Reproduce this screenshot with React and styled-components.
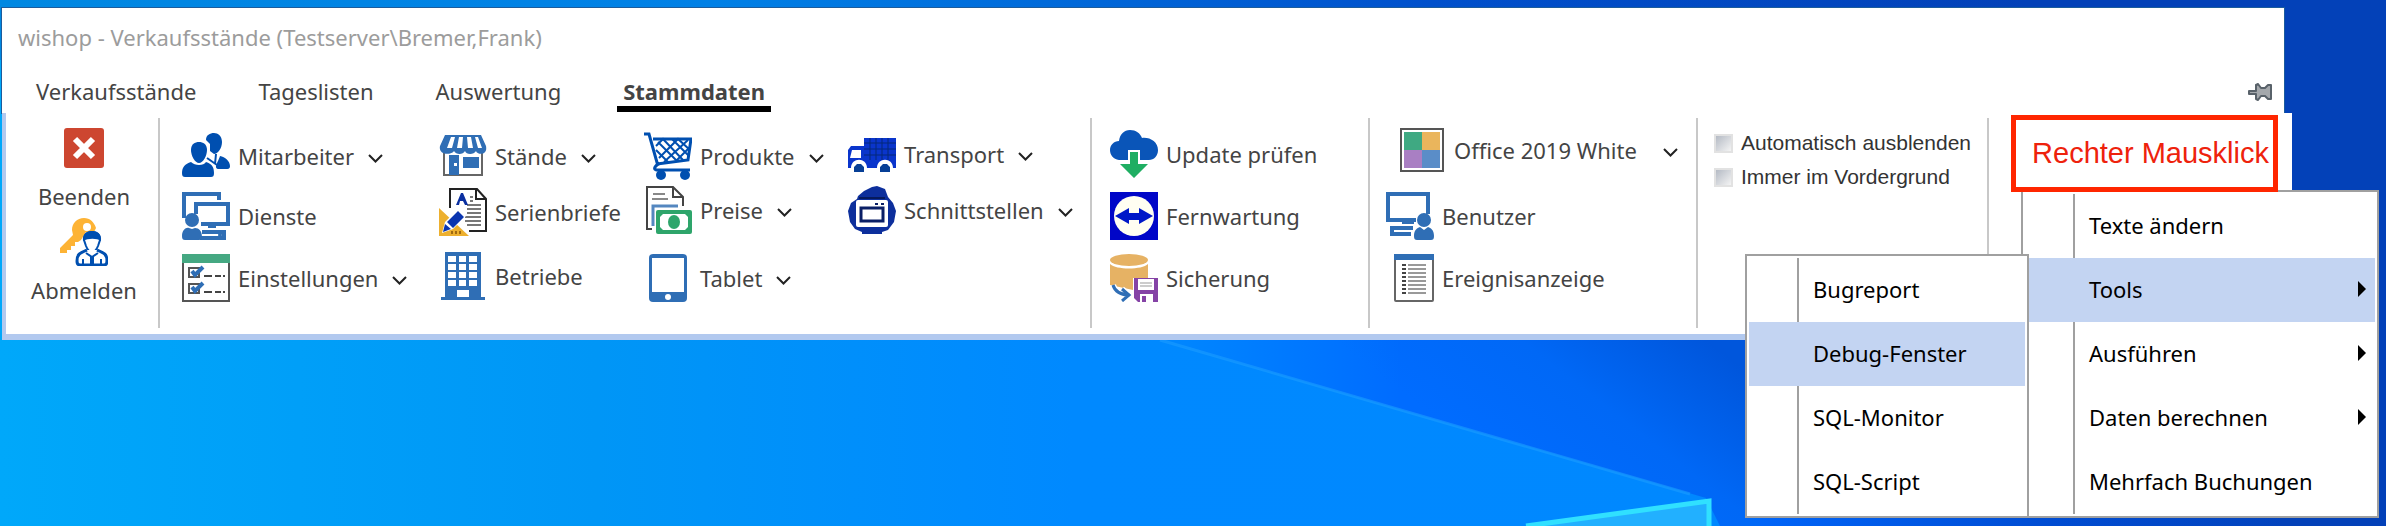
import React, { useState } from 'react';
import styled, { createGlobalStyle } from 'styled-components';

const GlobalStyle = createGlobalStyle`
    * {
        box-sizing: border-box;
    }

    body {
        margin: 0;
        font-family: "Noto Sans", "Open Sans", sans-serif;
        font-size: 22px;
        color: #444;
    }

    button,
    select {
        margin: 0;
        padding: 0;
        border: 0;
        background: none;
        font: inherit;
        color: inherit;
        white-space: nowrap;
    }
`;

const Desktop = styled.div`
    position: relative;
    min-height: 100vh;
    padding: 8px 94px 8px 2px;
    overflow: hidden;
    background: #0341b8;
`;

const WallpaperSvg = styled.svg`
    position: absolute;
    inset: 0;
    width: 100%;
    height: 100%;
`;

const AppWindow = styled.main`
    position: relative;
`;

const WindowHead = styled.header`
    margin-right: 8px;
    background: #fff;
    box-shadow: 0 0 0 1px #1c5c9c;
`;

const TitleBar = styled.h1`
    margin: 0;
    padding: 0 16px;
    font-size: 22px;
    font-weight: 400;
    line-height: 58px;
    color: #9c9c9c;
`;

const TabBar = styled.nav`
    display: flex;
    gap: 50px;
    height: 47px;
    padding: 12px 12px 0 28px;
`;

const Tab = styled.button`
    height: 34px;
    padding: 0 6px 2px;
    border-bottom: 6px solid ${(p) => (p.$active ? '#000' : 'transparent')};
    font-weight: ${(p) => (p.$active ? 700 : 400)};
    line-height: 26px;
`;

const PinButton = styled.button`
    display: flex;
    align-items: center;
    height: 28px;
    margin-left: auto;
`;

const Ribbon = styled.section`
    display: grid;
    grid-template-columns: 154fr 932fr 278fr 328fr 291fr 303fr;
    padding: 5px 0 6px;
    border-left: 4px solid #b2c9ef;
    border-bottom: 6px solid #b2c9ef;
    background: #fff;
`;

const Group = styled.div`
    display: grid;
    grid-template-columns: ${(p) => p.$columns || '1fr'};
    min-height: 210px;
    padding-left: ${(p) => p.$pad || 0}px;
    border-right: ${(p) => (p.$last ? '0' : '2px solid #c8c8c8')};
`;

const Column = styled.div`
    display: grid;
    grid-template-rows: ${(p) => p.$rows};
    align-content: start;
    align-items: start;
    justify-items: start;
    padding-top: ${(p) => p.$top}px;
`;

const LargeColumn = styled.div`
    display: flex;
    flex-direction: column;
    align-items: center;
    gap: 6px;
    padding-top: 6px;
`;

const LargeButton = styled.button`
    display: flex;
    flex-direction: column;
    align-items: center;
    gap: 8px;
    line-height: 32px;
`;

const ItemButton = styled.button`
    display: flex;
    align-items: center;
    gap: 8px;
    height: 48px;
    line-height: 28px;
`;

const ItemSelect = styled.label`
    display: flex;
    align-items: center;
    gap: 8px;
    height: 48px;
    margin-left: 12px;
`;

const SkinSelect = styled.select`
    appearance: none;
    height: 48px;
    padding-right: 12px;
`;

const Icon = styled.svg`
    flex: none;
    width: 48px;
    height: 48px;
`;

const ChevronSvg = styled.svg`
    flex: none;
    width: 15px;
    height: 9px;
    margin: 4px 0 0 6px;
`;

const CheckColumn = styled.div`
    display: flex;
    flex-direction: column;
    gap: 4px;
    padding-top: 10px;
`;

const CheckLabel = styled.label`
    display: flex;
    align-items: center;
    gap: 8px;
    font-family: "Liberation Sans", sans-serif;
    font-size: 21px;
    line-height: 30px;
    white-space: nowrap;
    color: #333;
`;

const CheckBox = styled.input`
    appearance: none;
    width: 19px;
    height: 19px;
    margin: 0;
    border: 2px solid #e2e2e2;
    outline: 0;
    background: linear-gradient(135deg, #b4bac4, #f4f4f4);

    &:checked {
        background: #1f6bb5;
    }
`;

const Annotation = styled.div`
    position: absolute;
    top: 115px;
    right: 108px;
    z-index: 3;
    padding: 17px 4px 17px 16px;
    border: 5px solid #ff2600;
    font-family: "Liberation Sans", sans-serif;
    font-size: 29px;
    line-height: 33px;
    white-space: nowrap;
    color: #ee220c;
`;

const MenuLayer = styled.div`
    position: absolute;
    top: 190px;
    right: 7px;
    display: flex;
    align-items: flex-end;
`;

const Menu = styled.ul`
    position: relative;
    z-index: ${(p) => (p.$sub ? 2 : 1)};
    min-width: ${(p) => (p.$sub ? 284 : 358)}px;
    margin: 0 ${(p) => (p.$sub ? '-8px' : 0)} 0 0;
    padding: 2px;
    border: 2px solid #a0a0a0;
    background: #fff;
    list-style: none;
`;

const MenuButton = styled.button`
    display: flex;
    align-items: center;
    width: 100%;
    height: 64px;
    padding: 0 9px 2px 0;
    text-align: left;
    color: #000;
    background: ${(p) => (p.$active ? '#c3d4f2' : '#fff')};

    &::before {
        content: "";
        align-self: stretch;
        width: 48px;
        margin: 0 14px -2px 0;
        border-right: 2px solid ${(p) => (p.$active ? 'transparent' : '#a0a0a0')};
    }
`;

const Arrow = styled.svg`
    width: 8px;
    height: 16px;
    margin-left: auto;
`;

const BLUE = '#2f6eb5';
const DEEP = '#004fb0';

const Wallpaper = () => (
    <WallpaperSvg viewBox="0 0 2386 526" preserveAspectRatio="none" aria-hidden="true">
        <defs>
            <linearGradient id="sky" x1="0" x2="1">
                <stop offset="0" stopColor="#00a8fa" />
                <stop offset="0.25" stopColor="#0096f6" />
                <stop offset="0.45" stopColor="#0089ff" />
                <stop offset="0.72" stopColor="#0088ff" />
            </linearGradient>
            <linearGradient id="top" x1="0" x2="1">
                <stop offset="0" stopColor="#0088e2" />
                <stop offset="0.3" stopColor="#0080e6" />
                <stop offset="0.6" stopColor="#0050cc" />
                <stop offset="0.85" stopColor="#0341b8" />
            </linearGradient>
            <linearGradient id="shade" gradientUnits="userSpaceOnUse" x1="1540" y1="500" x2="1680" y2="320">
                <stop offset="0" stopColor="#006cff" />
                <stop offset="0.5" stopColor="#0068f6" />
                <stop offset="1" stopColor="#0056dc" />
            </linearGradient>
            <linearGradient id="edge" gradientUnits="userSpaceOnUse" x1="1160" y1="0" x2="1400" y2="0">
                <stop offset="0" stopColor="#0088ff" />
                <stop offset="1" stopColor="#0088ff" stopOpacity="0" />
            </linearGradient>
            <linearGradient id="right" gradientUnits="userSpaceOnUse" x1="1760" y1="0" x2="2340" y2="0">
                <stop offset="0" stopColor="#0064f8" />
                <stop offset="0.5" stopColor="#004cd2" />
                <stop offset="1" stopColor="#0341b8" />
            </linearGradient>
        </defs>
        <rect width="2386" height="526" fill="url(#sky)" />
        <path d="M1160 340H1760V526H1720L1706 498Z" fill="url(#shade)" />
        <path d="M1160 340H1400V412Z" fill="url(#edge)" />
        <path d="M1160 340 1690 494" stroke="#1c9dff" strokeWidth="3" opacity="0.6" />
        <rect x="1760" width="626" height="526" fill="url(#right)" />
        <rect x="2280" width="106" height="526" fill="#0341b8" />
        <rect width="2386" height="60" fill="url(#top)" />
        <path d="M1526 526 1710 500V526Z" fill="#22b0ff" />
        <path d="M1526 526 1709 501V526" fill="none" stroke="#30e0ff" strokeWidth="5" />
    </WallpaperSvg>
);

const Chevron = () => (
    <ChevronSvg viewBox="0 0 15 9" aria-hidden="true">
        <path d="M1 1 7.5 7.5 14 1" fill="none" stroke="#222" strokeWidth="2" />
    </ChevronSvg>
);

const CloseIcon = () => (
    <Icon viewBox="0 0 48 48">
        <rect x="4" y="4" width="40" height="40" rx="3" fill="#cd4630" />
        <path d="M15 15 33 33M33 15 15 33" stroke="#fff" strokeWidth="6" />
    </Icon>
);

const LogoutIcon = () => (
    <Icon viewBox="0 0 48 48">
        <path d="M24 0C17 0 12 5 12 12L13 17 0 30V35H7V32H11V28H15V24H18L21 22 26 14 34 14 36 10C34 4 30 0 24 0Z" fill="#fdb335" />
        <circle cx="27" cy="9" r="4" fill="#fff" />
        <path d="M24 22C24 16 28 14 32 14S40 16 40 22L38 28C36 33 34 34 32 34S28 33 26 28Z" fill="#fff" stroke={DEEP} strokeWidth="2" />
        <path d="M23 23C22 15 28 13 32 13S42 15 41 23C37 20 28 20 23 23Z" fill={DEEP} />
        <path d="M27 32C20 35 17 36 17 43 17 46 18 47 20 47H44C46 47 47 46 47 43 47 36 44 35 37 32" fill="#fff" stroke={DEEP} strokeWidth="3" />
        <path d="M26 35 32 39 38 35M23 41V46M41 41V46" fill="none" stroke={DEEP} strokeWidth="2" />
        <path d="M30 38H34V46H30Z" fill={DEEP} />
    </Icon>
);

const StaffIcon = () => (
    <Icon viewBox="0 0 48 48">
        <path d="M24 8C24 3 28 1 32 1S40 4 40 10C40 16 36 22 32 22L28 19V12Z" fill={DEEP} />
        <path d="M35 31C37 27 38 24 38 24 43 25 48 29 48 34 48 37 46 37 44 37H37C34 37 33 35 35 31Z" fill={DEEP} />
        <path d="M9 18C9 12 13 10 17 10S25 12 25 18C25 24 21 31 17 31S9 24 9 18Z" fill={DEEP} />
        <path d="M9 30C11 32 14 33 17 33S23 32 24 30C30 32 32 35 32 41 32 44 31 45 29 45H3C1 45 0 44 0 41 0 35 3 32 9 30Z" fill={DEEP} />
        <path d="M25 26 35 33M34 22 33 32" stroke={DEEP} strokeWidth="2" />
    </Icon>
);

const ServicesIcon = () => (
    <Icon viewBox="0 0 48 48">
        <path d="M2 26V2H37V8" fill="none" stroke={BLUE} strokeWidth="4" />
        <path d="M14 22V12H46V32H19" fill="none" stroke={BLUE} strokeWidth="4" />
        <path d="M26 34H34V36H26Z" fill={BLUE} />
        <path d="M20 40H42V46H18" fill="none" stroke={BLUE} strokeWidth="4" />
        <circle cx="38" cy="43" r="2" fill={BLUE} />
        <circle cx="10" cy="28" r="7" fill={BLUE} />
        <path d="M0 44C0 38 4 35 7 36L10 37 13 36C17 36 20 39 20 45 20 47 19 48 17 48H3C1 48 0 47 0 44Z" fill={BLUE} />
    </Icon>
);

const SettingsIcon = () => (
    <Icon viewBox="0 0 48 48">
        <rect x="1" y="1" width="46" height="46" fill="#fff" stroke="#555" strokeWidth="2" />
        <path d="M0 0H48V9H0Z" fill="#45a882" />
        <path d="M7 14H17V23H7ZM7 30H17V39H7Z" fill="none" stroke="#555" strokeWidth="2" />
        <path d="M10 17 13 21 21 13M10 33 13 37 21 29" fill="none" stroke={BLUE} strokeWidth="4" />
        <path d="M22 22H30M33 22H39M41 22H43M22 38H30M33 38H39M41 38H43" stroke="#444" strokeWidth="2" />
    </Icon>
);

const StallIcon = () => (
    <Icon viewBox="0 0 48 48">
        <path d="M5 20V43H43V20" fill="#fff" stroke="#666" strokeWidth="2" />
        <path d="M6 3H42L47 14C49 24 38 23 37 19 35 23 27 23 26 19 24 23 17 23 15 19 13 23 -1 24 1 14Z" fill={BLUE} />
        <path d="M12 5H16L13 16H8ZM20 5H24L23 16H18ZM28 5H32L34 16H29ZM36 5H39L43 16H39Z" fill="#fff" />
        <path d="M10 23H20V43H10Z M24 25H40V36H24Z" fill={BLUE} />
        <rect x="15" y="31" width="3" height="3" fill="#fff" />
    </Icon>
);

const LetterIcon = () => (
    <Icon viewBox="0 0 48 48">
        <path d="M11 20V1H38L47 11V43H30" fill="#fff" stroke="#222" strokeWidth="2" />
        <path d="M37 1V11H47" fill="none" stroke="#222" strokeWidth="2" />
        <path d="M31 9H34M31 13H34M28 17H42M28 21H42M28 25H42M26 29H42M26 33H42M28 37H42" stroke="#777" strokeWidth="2" />
        <path d="M17 17 22 5H24L29 17H26L24 13H21L20 17Z" fill="#0a2fa0" />
        <path d="M0 20V48H30Z" fill="#edb02f" />
        <path d="M13 43V46M17 43V46M21 43V46" stroke="#a06a10" strokeWidth="2" />
        <path d="M3 45 6 34 20 20 28 27 14 41Z" fill="#fff" />
        <path d="M4 44 6 36 12 41ZM8 34 19 23 25 29 14 40Z" fill="#0a35b0" />
    </Icon>
);

const BuildingIcon = () => (
    <Icon viewBox="0 0 48 48">
        <path d="M6 0H42V45H46V48H2V45H6Z" fill={BLUE} />
        <path d="M9 4H17V10H9ZM20 4H27V10H20ZM30 4H38V10H30ZM9 12H17V18H9ZM20 12H27V18H20ZM30 12H38V18H30ZM9 20H17V26H9ZM20 20H27V26H20ZM30 20H38V26H30ZM9 28H17V34H9ZM20 28H27V34H20ZM30 28H38V34H30ZM18 38H30V45H18Z" fill="#fff" />
    </Icon>
);

const CartIcon = () => (
    <Icon viewBox="0 0 48 48">
        <path d="M0 2H5L14 34M9 7H47L44 28 13 32M14 32C9 36 10 38 14 38H46" fill="none" stroke={DEEP} strokeWidth="3" />
        <path d="M12 14 19 7 39 28M12 18 24 30M15 26 34 7 46 18M28 7 45 24M20 30 44 8M32 29 46 15M14 10 32 28" fill="none" stroke={DEEP} strokeWidth="2" />
        <circle cx="17" cy="43" r="5" fill={DEEP} />
        <circle cx="41" cy="43" r="5" fill={DEEP} />
    </Icon>
);

const PriceIcon = () => (
    <Icon viewBox="0 0 48 48">
        <path d="M8 43H3V1H29L39 11V20" fill="#fff" stroke="#444" strokeWidth="2" />
        <path d="M29 1V11H39" fill="none" stroke="#444" strokeWidth="2" />
        <path d="M9 8H21M8 13H24" stroke="#888" strokeWidth="2" />
        <path d="M9 40V20H34" fill="none" stroke="#5487c0" strokeWidth="3" />
        <rect x="12" y="24" width="36" height="24" rx="2" fill="#2ea56b" />
        <path d="M19 28H41L44 31V41L41 44H19L16 41V31Z" fill="#fff" />
        <ellipse cx="30" cy="36" rx="6" ry="7" fill="#2ea56b" />
    </Icon>
);

const TabletIcon = () => (
    <Icon viewBox="0 0 48 48">
        <rect x="5" y="0" width="38" height="48" rx="4" fill={BLUE} />
        <path d="M8 4H40V38H8Z" fill="#fff" />
        <circle cx="24" cy="43" r="3" fill="#fff" />
    </Icon>
);

const TruckIcon = () => (
    <Icon viewBox="0 0 48 48">
        <path d="M16 8H48V38H0V20L3 16H16Z" fill="#0a35cc" />
        <path d="M16 13H48M16 19H48M16 25H48M22 8V30M28 8V30M34 8V30M40 8V30" stroke="#052878" strokeWidth="1" />
        <path d="M4 20H13V28H2Z" fill="#fff" />
        <path d="M3 38C3 27 19 27 19 38ZM29 38C29 27 45 27 45 38Z" fill="#fff" />
        <path d="M6 42V37L9 34H13L16 37V42ZM32 42V37L35 34H39L42 37V42Z" fill="#073f96" />
    </Icon>
);

const InterfaceIcon = () => (
    <Icon viewBox="0 0 48 48">
        <path d="M10 10 16 5 24 1 29 0 37 3 40 11 45 17 48 25 46 36 40 44 34 46V48H14V46L7 43 2 36 0 25 3 17 9 13Z" fill="#0d2f9c" />
        <rect x="8" y="14" width="32" height="27" rx="2" fill="#fff" />
        <path d="M13 22H35V35H13Z" fill="#fff" stroke="#0a1f66" strokeWidth="3" />
        <path d="M27 18H30M33 18H36" stroke="#0a1f66" strokeWidth="2" />
        <path d="M11 12H37" stroke="#061a5c" strokeWidth="2" />
    </Icon>
);

const UpdateIcon = () => (
    <Icon viewBox="0 0 48 48">
        <path d="M9 30C3 29 0 25 0 20 0 15 4 11 9 11 10 4 14 0 20 0 26 0 30 3 32 8 40 7 48 12 48 20 48 26 44 30 39 30Z" fill="#0a55b8" />
        <path d="M18 20H30V34H18Z" fill="#fff" />
        <path d="M20 22H28V34H38L24 48 10 34H20Z" fill="#1fae62" />
    </Icon>
);

const RemoteIcon = () => (
    <Icon viewBox="0 0 48 48">
        <rect width="48" height="48" fill="#0006c8" />
        <circle cx="24" cy="24" r="20" fill="#fffef2" />
        <path d="M5 24 19 16V21H29V16L43 24 29 32V28H19V32Z" fill="#0018c8" />
    </Icon>
);

const BackupIcon = () => (
    <Icon viewBox="0 0 48 48">
        <ellipse cx="19" cy="6" rx="19" ry="6" fill="#e6b264" />
        <path d="M0 10C6 16 32 16 38 10V24H23V36L0 31Z" fill="#e6b264" />
        <path d="M3 31C5 38 10 41 18 41M12 35 19 41 12 47" fill="none" stroke="#fff" strokeWidth="6" />
        <path d="M3 31C5 38 10 41 20 41M12 35 19 41 12 47" fill="none" stroke={BLUE} strokeWidth="3" />
        <path d="M24 24H48V48H28L24 44Z" fill="#8543a6" />
        <path d="M28 25H44V36H28ZM30 40H43V48H30Z" fill="#fff" />
        <path d="M30 29H42M30 32H42" stroke="#999" strokeWidth="1" />
        <path d="M32 42H36V48H32Z" fill="#8543a6" />
    </Icon>
);

const SkinIcon = () => (
    <Icon viewBox="0 0 48 48">
        <rect x="3" y="3" width="42" height="42" fill="#fff" stroke="#555" strokeWidth="2" />
        <path d="M6 6H24V24H6Z" fill="#3fa982" />
        <path d="M24 6H42V24H24Z" fill="#eab55c" />
        <path d="M6 24H24V42H6Z" fill="#a97fc3" />
        <path d="M24 24H42V42H24Z" fill="#5a8dc8" />
    </Icon>
);

const UserIcon = () => (
    <Icon viewBox="0 0 48 48">
        <path d="M30 28H2V2H42V22" fill="none" stroke={BLUE} strokeWidth="4" />
        <path d="M16 28H28V32H16Z" fill={BLUE} />
        <path d="M27 36H6V42H25" fill="none" stroke={BLUE} strokeWidth="4" />
        <circle cx="38" cy="28" r="7" fill={BLUE} />
        <path d="M28 44C28 38 31 36 34 35L38 38 42 35C45 36 48 38 48 44 48 47 47 48 45 48H31C29 48 28 47 28 44Z" fill={BLUE} />
    </Icon>
);

const EventIcon = () => (
    <Icon viewBox="0 0 48 48">
        <rect x="9" y="1" width="38" height="46" rx="1" fill="#fff" stroke="#666" strokeWidth="2" />
        <path d="M8 0H48V6H8Z" fill={BLUE} />
        <path d="M16 11H20M16 15H20M16 19H20M16 23H20M16 27H20M16 31H20M16 35H20M16 39H20" stroke="#444" strokeWidth="2" />
        <path d="M22 11H40M22 15H40M22 19H40M22 23H40M22 27H40M22 31H40M22 35H40M22 39H40" stroke="#999" strokeWidth="2" />
    </Icon>
);

const tabs = ['Verkaufsstände', 'Tageslisten', 'Auswertung', 'Stammdaten'];

const masterColumns = [
    {
        top: 14,
        rows: '60px 62px 48px',
        items: [
            { label: 'Mitarbeiter', icon: StaffIcon, more: true },
            { label: 'Dienste', icon: ServicesIcon },
            { label: 'Einstellungen', icon: SettingsIcon, more: true },
        ],
    },
    {
        top: 14,
        rows: '56px 64px 48px',
        items: [
            { label: 'Stände', icon: StallIcon, more: true },
            { label: 'Serienbriefe', icon: LetterIcon },
            { label: 'Betriebe', icon: BuildingIcon },
        ],
    },
    {
        top: 14,
        rows: '54px 68px 48px',
        items: [
            { label: 'Produkte', icon: CartIcon, more: true },
            { label: 'Preise', icon: PriceIcon, more: true },
            { label: 'Tablet', icon: TabletIcon, more: true },
        ],
    },
    {
        top: 12,
        rows: '56px 48px',
        items: [
            { label: 'Transport', icon: TruckIcon, more: true },
            { label: 'Schnittstellen', icon: InterfaceIcon, more: true },
        ],
    },
];

const serviceItems = [
    { label: 'Update prüfen', icon: UpdateIcon },
    { label: 'Fernwartung', icon: RemoteIcon },
    { label: 'Sicherung', icon: BackupIcon },
];

const toolItems = ['Bugreport', 'Debug-Fenster', 'SQL-Monitor', 'SQL-Script'];

const contextItems = [
    { label: 'Texte ändern' },
    { label: 'Tools', sub: true },
    { label: 'Ausführen', sub: true },
    { label: 'Daten berechnen', sub: true },
    { label: 'Mehrfach Buchungen' },
];

const Item = ({ label, icon: ItemIcon, more }) => (
    <ItemButton type="button">
        <ItemIcon />
        {label}
        {more && <Chevron />}
    </ItemButton>
);

const App = () => {
    const [activeTab, setActiveTab] = useState('Stammdaten');
    const [activeTool, setActiveTool] = useState('Debug-Fenster');

    return (
        <Desktop>
            <GlobalStyle />
            <Wallpaper />

            <AppWindow>
                <WindowHead>
                    <TitleBar>wishop - Verkaufsstände (Testserver\Bremer,Frank)</TitleBar>
                    <TabBar>
                        {tabs.map((tab) => (
                            <Tab key={tab} type="button" $active={tab === activeTab} onClick={() => setActiveTab(tab)}>
                                {tab}
                            </Tab>
                        ))}
                        <PinButton type="button" aria-label="Menüband anheften">
                            <svg width="24" height="18" viewBox="0 0 24 18">
                                <path
                                    d="M1 8H8V2L10 1 13 5H17L20 2H23V16H20L17 13H13L10 17 8 16V11H1Z"
                                    fill="#a4a8ac"
                                    stroke="#59626a"
                                    strokeWidth="2"
                                    strokeLinejoin="round"
                                />
                            </svg>
                        </PinButton>
                    </TabBar>
                </WindowHead>

                <Ribbon>
                    <Group $pad={4}>
                        <LargeColumn>
                            <LargeButton type="button">
                                <CloseIcon />
                                Beenden
                            </LargeButton>
                            <LargeButton type="button">
                                <LogoutIcon />
                                Abmelden
                            </LargeButton>
                        </LargeColumn>
                    </Group>

                    <Group $pad={22} $columns="257fr 205fr 204fr 242fr">
                        {masterColumns.map((column, i) => (
                            <Column key={i} $top={column.top} $rows={column.rows}>
                                {column.items.map((item) => (
                                    <Item key={item.label} {...item} />
                                ))}
                            </Column>
                        ))}
                    </Group>

                    <Group $pad={18}>
                        <Column $top={12} $rows="62px 62px 48px">
                            {serviceItems.map((item) => (
                                <Item key={item.label} {...item} />
                            ))}
                        </Column>
                    </Group>

                    <Group $pad={16}>
                        <Column $top={8} $rows="66px 62px 48px">
                            <ItemSelect>
                                <SkinIcon />
                                <SkinSelect aria-label="Design">
                                    <option>Office 2019 White</option>
                                </SkinSelect>
                                <Chevron />
                            </ItemSelect>
                            <Item label="Benutzer" icon={UserIcon} />
                            <Item label="Ereignisanzeige" icon={EventIcon} />
                        </Column>
                    </Group>

                    <Group $pad={16}>
                        <CheckColumn>
                            <CheckLabel>
                                <CheckBox type="checkbox" />
                                Automatisch ausblenden
                            </CheckLabel>
                            <CheckLabel>
                                <CheckBox type="checkbox" />
                                Immer im Vordergrund
                            </CheckLabel>
                        </CheckColumn>
                    </Group>

                    <Group $last />
                </Ribbon>
            </AppWindow>

            <Annotation>Rechter Mausklick</Annotation>

            {/* Context menu with the opened "Tools" submenu on its left */}
            <MenuLayer>
                <Menu $sub>
                    {toolItems.map((label) => (
                        <li key={label}>
                            <MenuButton type="button" $active={label === activeTool} onMouseEnter={() => setActiveTool(label)}>
                                {label}
                            </MenuButton>
                        </li>
                    ))}
                </Menu>
                <Menu>
                    {contextItems.map(({ label, sub }) => (
                        <li key={label}>
                            <MenuButton type="button" $active={label === 'Tools'}>
                                {label}
                                {sub && (
                                    <Arrow viewBox="0 0 8 16">
                                        <path d="M0 0 8 8 0 16Z" fill="#000" />
                                    </Arrow>
                                )}
                            </MenuButton>
                        </li>
                    ))}
                </Menu>
            </MenuLayer>
        </Desktop>
    );
};

export default App;
